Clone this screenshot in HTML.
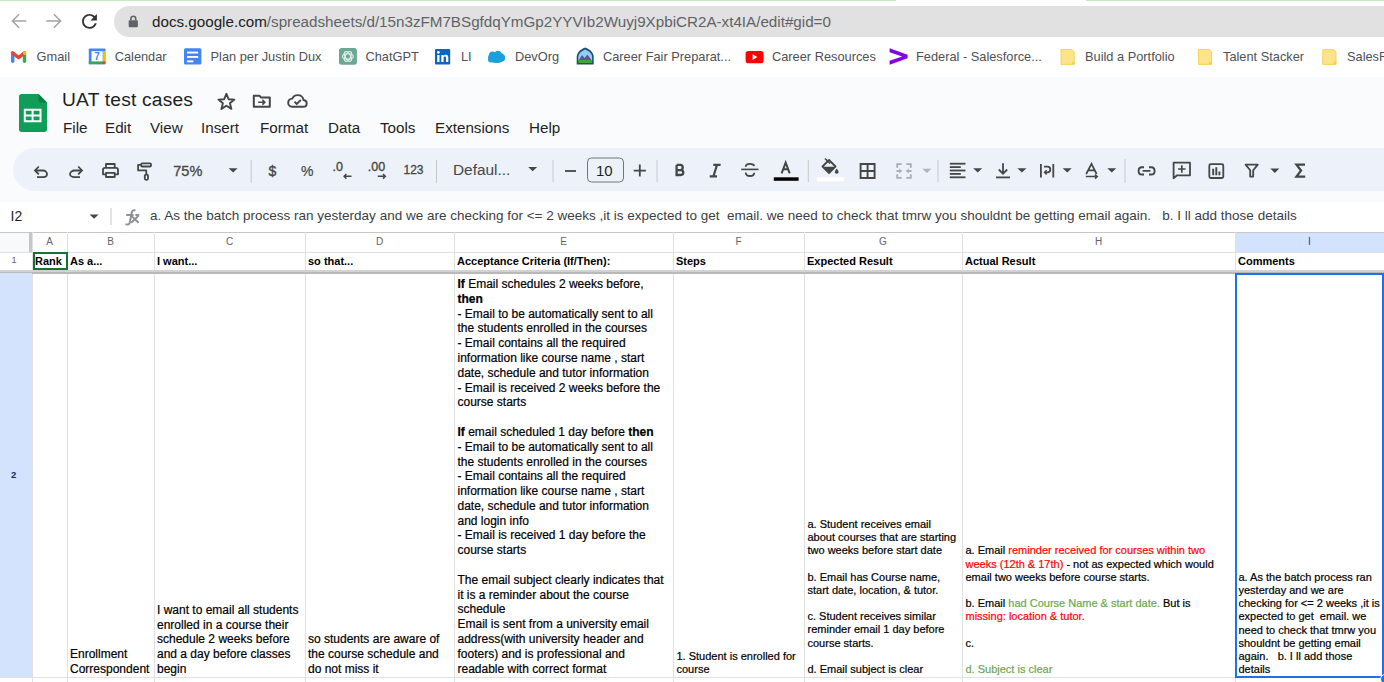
<!DOCTYPE html>
<html><head><meta charset="utf-8"><style>
*{margin:0;padding:0;box-sizing:border-box}
html,body{width:1384px;height:682px;overflow:hidden;background:#fff;font-family:"Liberation Sans",sans-serif;color:#202124}
.a{position:absolute;white-space:pre}
svg{position:absolute;overflow:visible}
.url{font-size:15px;color:#5f6368}
.bm{font-size:12.8px;color:#3c4043}
.menu{font-size:15px;color:#1f1f1f}
.cell{position:absolute;white-space:pre;font-size:12px;line-height:14.8px;color:#000;-webkit-text-stroke:0.2px currentColor}
.c11{font-size:11px;line-height:13.2px}
.colh{position:absolute;font-size:10px;color:#5f6368;text-align:center}
.r{color:#ff0000}
.g{color:#6aa84f}
b{font-weight:bold}
</style></head><body>
<div class="a" style="left:0px;top:0px;width:896px;height:1px;background:#c9e7c4;"></div>
<div class="a" style="left:1086px;top:0px;width:298px;height:1px;background:#c9e7c4;"></div>
<div class="a" style="left:114px;top:6px;width:1300px;height:31px;background:#e1e1e1;border-radius:16px"></div>
<div class="a " style="left:152px;top:14.03px;font-size:15.2px;line-height:15.2px;color:#5f6368;font-weight:normal;"><span style="color:#202124">docs.google.com</span>/spreadsheets/d/15n3zFM7BSgfdqYmGp2YYVIb2Wuyj9XpbiCR2A-xt4IA/edit#gid=0</div>
<div class="a " style="left:36.6px;top:50.96px;font-size:12.8px;line-height:12.8px;color:#4d5156;font-weight:normal;">Gmail</div>
<div class="a " style="left:114.7px;top:50.96px;font-size:12.8px;line-height:12.8px;color:#4d5156;font-weight:normal;">Calendar</div>
<div class="a " style="left:210.5px;top:50.96px;font-size:12.8px;line-height:12.8px;color:#4d5156;font-weight:normal;">Plan per Justin Dux</div>
<div class="a " style="left:365.5px;top:50.96px;font-size:12.8px;line-height:12.8px;color:#4d5156;font-weight:normal;">ChatGPT</div>
<div class="a " style="left:461px;top:50.96px;font-size:12.8px;line-height:12.8px;color:#4d5156;font-weight:normal;">LI</div>
<div class="a " style="left:515px;top:50.96px;font-size:12.8px;line-height:12.8px;color:#4d5156;font-weight:normal;">DevOrg</div>
<div class="a " style="left:603px;top:50.96px;font-size:12.8px;line-height:12.8px;color:#4d5156;font-weight:normal;">Career Fair Preparat...</div>
<div class="a " style="left:772px;top:50.96px;font-size:12.8px;line-height:12.8px;color:#4d5156;font-weight:normal;">Career Resources</div>
<div class="a " style="left:916px;top:50.96px;font-size:12.8px;line-height:12.8px;color:#4d5156;font-weight:normal;">Federal - Salesforce...</div>
<div class="a " style="left:1085px;top:50.96px;font-size:12.8px;line-height:12.8px;color:#4d5156;font-weight:normal;">Build a Portfolio</div>
<div class="a " style="left:1223px;top:50.96px;font-size:12.8px;line-height:12.8px;color:#4d5156;font-weight:normal;">Talent Stacker</div>
<div class="a " style="left:1347px;top:50.96px;font-size:12.8px;line-height:12.8px;color:#4d5156;font-weight:normal;">SalesForce</div>
<div class="a" style="left:0px;top:77px;width:1384px;height:125px;background:#f9fbfd;"></div>
<div class="a " style="left:62px;top:89.95px;font-size:19.2px;line-height:19.2px;color:#1f1f1f;font-weight:normal;letter-spacing:0.2px">UAT test cases</div>
<div class="a " style="left:63px;top:120.43px;font-size:15.2px;line-height:15.2px;color:#1f1f1f;font-weight:normal;">File</div>
<div class="a " style="left:105px;top:120.43px;font-size:15.2px;line-height:15.2px;color:#1f1f1f;font-weight:normal;">Edit</div>
<div class="a " style="left:150px;top:120.43px;font-size:15.2px;line-height:15.2px;color:#1f1f1f;font-weight:normal;">View</div>
<div class="a " style="left:201px;top:120.43px;font-size:15.2px;line-height:15.2px;color:#1f1f1f;font-weight:normal;">Insert</div>
<div class="a " style="left:260px;top:120.43px;font-size:15.2px;line-height:15.2px;color:#1f1f1f;font-weight:normal;">Format</div>
<div class="a " style="left:328px;top:120.43px;font-size:15.2px;line-height:15.2px;color:#1f1f1f;font-weight:normal;">Data</div>
<div class="a " style="left:380px;top:120.43px;font-size:15.2px;line-height:15.2px;color:#1f1f1f;font-weight:normal;">Tools</div>
<div class="a " style="left:435px;top:120.43px;font-size:15.2px;line-height:15.2px;color:#1f1f1f;font-weight:normal;">Extensions</div>
<div class="a " style="left:529px;top:120.43px;font-size:15.2px;line-height:15.2px;color:#1f1f1f;font-weight:normal;">Help</div>
<div class="a" style="left:13px;top:148px;width:1400px;height:43px;background:#edf2fa;border-radius:22px"></div>
<div class="a " style="left:173.3px;top:164.43px;font-size:14.5px;line-height:14.5px;color:#444746;font-weight:normal;-webkit-text-stroke:0.3px #444746">75%</div>
<div class="a " style="left:453px;top:162.46px;font-size:15.4px;line-height:15.4px;color:#444746;font-weight:normal;">Defaul...</div>
<div class="a " style="left:596px;top:163.10px;font-size:15px;line-height:15px;color:#1f1f1f;font-weight:normal;">10</div>
<div class="a " style="left:268.5px;top:164.15px;font-size:14px;line-height:14px;color:#444746;font-weight:normal;-webkit-text-stroke:0.35px #444746">$</div>
<div class="a " style="left:301px;top:163.65px;font-size:14px;line-height:14px;color:#444746;font-weight:normal;-webkit-text-stroke:0.2px #444746">%</div>
<div class="a " style="left:332.5px;top:161.22px;font-size:12.5px;line-height:12.5px;color:#444746;font-weight:normal;-webkit-text-stroke:0.35px #444746">.0</div>
<div class="a " style="left:367.8px;top:161.22px;font-size:12.5px;line-height:12.5px;color:#444746;font-weight:normal;-webkit-text-stroke:0.35px #444746">.00</div>
<div class="a " style="left:403.5px;top:163.84px;font-size:12px;line-height:12px;color:#444746;font-weight:normal;-webkit-text-stroke:0.3px #444746">123</div>
<div class="a" style="left:0px;top:202px;width:1384px;height:30px;background:#fff;"></div>
<div class="a " style="left:10.5px;top:209.15px;font-size:14px;line-height:14px;color:#1f1f1f;font-weight:normal;">I2</div>
<div class="a " style="left:150px;top:209.07px;font-size:13.5px;line-height:13.5px;color:#3c4043;font-weight:normal;">a. As the batch process ran yesterday and we are checking for &lt;= 2 weeks ,it is expected to get  email. we need to check that tmrw you shouldnt be getting email again.   b. I ll add those details</div>
<svg style="left:0;top:0" width="1384" height="682" viewBox="0 0 1384 682"><g fill="none" stroke="#a3a3a3" stroke-width="1.5" stroke-linecap="square"><path d="M12.8 21H25.6M18.6 14.8L12.4 21L18.6 27.2"/><path d="M47 21H60.2M54.4 14.8L60.6 21L54.4 27.2"/></g><path transform="translate(78.3,10.2) scale(0.93)" fill="#333" d="M17.65 6.35C16.2 4.9 14.21 4 12 4c-4.42 0-7.99 3.58-7.99 8s3.57 8 7.99 8c3.73 0 6.84-2.55 7.73-6h-2.08c-.82 2.33-3.04 4-5.65 4-3.31 0-6-2.69-6-6s2.69-6 6-6c1.66 0 3.14.69 4.22 1.78L13 11h7V4l-2.35 2.35z"/><rect x="128.7" y="20.2" width="9.2" height="7" rx="1" fill="#5f6368"/><path d="M130.9 20.6V18.6a2.4 2.4 0 0 1 4.8 0V20.6" fill="none" stroke="#5f6368" stroke-width="1.6"/><g fill="none" stroke-width="3.4" stroke-linecap="round" stroke-linejoin="round"><path d="M12.7 54.5V61.2" stroke="#4285f4"/><path d="M24.5 54.5V61.2" stroke="#34a853"/><path d="M12.6 52.9L18.6 57.6L24.6 52.9" stroke="#ea4335"/><path d="M24.6 52.9L24.6 53.2" stroke="#fbbc04"/></g><rect x="88.8" y="48.4" width="16.6" height="15.8" rx="0.8" fill="#4285f4"/><rect x="102.6" y="51.2" width="2.8" height="10.4" fill="#fbbc04"/><rect x="88.8" y="61.4" width="13.8" height="2.8" fill="#34a853"/><rect x="102.6" y="61.4" width="2.8" height="2.8" fill="#ea4335"/><rect x="91.5" y="51.2" width="11.1" height="10.2" fill="#fff"/><text x="97" y="60.4" font-size="10" font-weight="bold" fill="#4285f4" text-anchor="middle" font-family="Liberation Sans">7</text><rect x="184" y="48.2" width="17.4" height="16.2" rx="1.5" fill="#4285f4"/><rect x="187" y="51.6" width="11.2" height="1.9" fill="#fff"/><rect x="187" y="56" width="11.2" height="1.9" fill="#fff"/><rect x="187" y="60.4" width="6.4" height="1.9" fill="#fff"/><rect x="339" y="48" width="17.9" height="16.8" rx="2.5" fill="#6aa893"/><g fill="none" stroke="#e3f1ec" stroke-width="1.1"><ellipse cx="347.9" cy="56.4" rx="5.4" ry="2.6"/><ellipse cx="347.9" cy="56.4" rx="5.4" ry="2.6" transform="rotate(60 347.9 56.4)"/><ellipse cx="347.9" cy="56.4" rx="5.4" ry="2.6" transform="rotate(120 347.9 56.4)"/></g><rect x="435" y="49" width="15.2" height="15.6" rx="1" fill="#0a66c2"/><rect x="437.2" y="55" width="2.3" height="7" fill="#fff"/><circle cx="438.35" cy="52.3" r="1.35" fill="#fff"/><path d="M441.3 62V55H443.5V56.2C444 55.3 445 54.8 446 54.8C447.6 54.8 448.3 55.8 448.3 57.6V62H446V58.1C446 57.1 445.7 56.6 444.9 56.6C444 56.6 443.6 57.2 443.6 58.2V62z" fill="#fff"/><g fill="#1ca0dc"><ellipse cx="496.5" cy="57.5" rx="8.5" ry="5.6"/><circle cx="492.5" cy="55" r="3.5"/><circle cx="498" cy="54.2" r="3.5"/><circle cx="501.5" cy="58" r="3.6"/><circle cx="491" cy="59.5" r="3"/></g><path d="M576.7 64.6V57C576.7 53 580 49.5 585.2 47.6C590.4 49.5 593.7 53 593.7 57V64.6z" fill="#1d4e7a"/><path d="M578.3 61V57.2C578.3 54 581 51.3 585.2 49.6C589.4 51.3 592.1 54 592.1 57.2V61z" fill="#8fd1f0"/><path d="M578.3 61L582 55L584.5 58L587.5 54.5L592.1 61z" fill="#6a4ca0"/><rect x="578.3" y="60" width="13.8" height="3" fill="#3aa83a"/><rect x="745.6" y="51" width="18" height="12.2" rx="2.8" fill="#ff0000"/><path d="M752.6 54.3V59.9L757.4 57.1z" fill="#fff"/><path d="M889.6 48.2L907.6 54.8V58.2L889.6 64.8V60.8L902.2 56.5L889.6 52.2z" fill="#8600e6"/><path d="M1061.0 49.6H1071.8999999999999L1074.1999999999998 51.9V64.4H1061.0z" fill="#fde48c" stroke="#f3d046" stroke-width="0.9"/><path d="M1071.8 61.8h2.6v2.6h-2.6z" fill="#f5d13c"/><path d="M1198.4 49.6H1209.3L1211.6 51.9V64.4H1198.4z" fill="#fde48c" stroke="#f3d046" stroke-width="0.9"/><path d="M1209.2 61.8h2.6v2.6h-2.6z" fill="#f5d13c"/><path d="M1322.8000000000002 49.6H1333.7L1336.0 51.9V64.4H1322.8000000000002z" fill="#fde48c" stroke="#f3d046" stroke-width="0.9"/><path d="M1333.6000000000001 61.8h2.6v2.6h-2.6z" fill="#f5d13c"/><path d="M21.5 94H38.5L47 102.5V129.5C47 131 45.8 132 44.5 132H21.5C20 132 19 131 19 129.5V96.5C19 95 20 94 21.5 94z" fill="#0f9d58"/><path d="M38.5 94V100C38.5 101.5 39.5 102.5 41 102.5H47z" fill="#087f43"/><path d="M23.8 108.8H41.5V122.3H23.8z M25.8 110.8V114.5H31.6V110.8z M33.6 110.8V114.5H39.5V110.8z M25.8 116.5V120.3H31.6V116.5z M33.6 116.5V120.3H39.5V116.5z" fill="#fff" fill-rule="evenodd"/><path d="M226.4 93.8L228.6 99.2L234.4 99.6L229.9 103.3L231.4 108.9L226.4 105.8L221.4 108.9L222.9 103.3L218.4 99.6L224.2 99.2z" fill="none" stroke="#444746" stroke-width="1.9" stroke-linejoin="round"/><path d="M253.8 95.8H259.4L261.2 97.6H269.8V106.8H253.8z" fill="none" stroke="#444746" stroke-width="2" stroke-linejoin="round"/><path d="M258.2 102.2H265M262.4 99.8L264.8 102.2L262.4 104.6" fill="none" stroke="#444746" stroke-width="1.6"/><path d="M292 106.8H303.2C305.3 106.8 306.7 105.3 306.7 103.4C306.7 101.5 305.3 100.2 303.5 100C303 97 300.6 95.1 297.6 95.1C295.1 95.1 293.2 96.5 292.3 98.6C289.8 98.8 288.2 100.7 288.2 102.8C288.2 105 289.9 106.8 292 106.8z" fill="none" stroke="#444746" stroke-width="1.9"/><path d="M294.5 101.8L296.8 104L300.8 100" fill="none" stroke="#444746" stroke-width="1.9"/><g fill="none" stroke="#444746" stroke-width="1.8"><path d="M35.5 170.5H43C45.3 170.5 47 172.2 47 174.1C47 176 45.3 177.2 43 177.2H37"/><path d="M38.8 166.5L35 170.5L38.8 174.4"/><path d="M82 170.5H74.5C72.2 170.5 70 172.2 70 174.1C70 176 72.2 177.2 74.5 177.2H80"/><path d="M78.2 166.5L82 170.5L78.2 174.4"/></g><g fill="none" stroke="#444746" stroke-width="1.8" stroke-linejoin="round"><path d="M106 167.4V164H114.7V167.4"/><path d="M105.8 174.3H103V169.8C103 168.6 103.8 167.9 105 167.9H116C117.2 167.9 118 168.6 118 169.8V174.3H115"/><path d="M106 172.9H114.7V177H106z"/></g><g fill="none" stroke="#444746" stroke-width="1.8" stroke-linejoin="round"><rect x="141.2" y="163.3" width="9.8" height="3.2" rx="1"/><path d="M141 164.9H138.1V170.4H146.3V174"/><rect x="144.8" y="174.6" width="3.2" height="5.2" rx="1.2"/></g><path d="M228.6 168.3h9l-4.5 4.3z" fill="#444746"/><path d="M528.2 167h9l-4.5 4.3z" fill="#444746"/><path d="M922.4 168.7h9l-4.5 4.3z" fill="#b0b3b8"/><path d="M973.2 168.2h9l-4.5 4.3z" fill="#444746"/><path d="M1017.4 168.2h9l-4.5 4.3z" fill="#444746"/><path d="M1062.7 168.2h9l-4.5 4.3z" fill="#444746"/><path d="M1107.3 168.2h9l-4.5 4.3z" fill="#444746"/><path d="M1270.3 168.6h9l-4.5 4.3z" fill="#444746"/><path d="M89.6 214.5h9l-4.5 4.3z" fill="#444746"/><rect x="250.7" y="160" width="1" height="23" fill="#c7c7c7"/><rect x="436.0" y="160" width="1" height="23" fill="#c7c7c7"/><rect x="552.5" y="160" width="1" height="22" fill="#c7c7c7"/><rect x="656.5" y="160" width="1" height="22" fill="#c7c7c7"/><rect x="807.8" y="160" width="1" height="22" fill="#c7c7c7"/><rect x="937.5" y="160" width="1" height="22" fill="#c7c7c7"/><rect x="1124.5" y="159" width="1" height="24" fill="#c7c7c7"/><rect x="110.5" y="208" width="1" height="17" fill="#c7c7c7"/><path d="M351.5 176.3H344.2M346.4 174L344.1 176.3L346.4 178.6" fill="none" stroke="#444746" stroke-width="1.5"/><path d="M377.8 176.3H385.2M383 174L385.3 176.3L383 178.6" fill="none" stroke="#444746" stroke-width="1.5"/><path d="M565 171H576" stroke="#444746" stroke-width="1.8"/><path d="M633.7 170.6H645.9M639.8 164.6V176.6" stroke="#444746" stroke-width="1.8"/><rect x="587.5" y="158" width="36" height="24" rx="4" fill="none" stroke="#747775" stroke-width="1"/><path d="M741.2 169.4H758.5" stroke="#444746" stroke-width="1.6"/><path d="M754.2 166.2C754 164.8 752.4 163.9 749.9 163.9C747.3 163.9 745.7 165.1 745.7 166.8" fill="none" stroke="#444746" stroke-width="1.8"/><path d="M745.6 172.6C745.9 174.6 747.6 176 750 176C752.6 176 754.2 174.7 754.2 172.7" fill="none" stroke="#444746" stroke-width="1.8"/><path d="M713.3 164.9H720.6M709.7 176.4H717M717 164.9L713.4 176.4" fill="none" stroke="#444746" stroke-width="2.1"/><path d="M676.6 164.9V175H680.6C682.5 175 683.3 174 683.3 172.6C683.3 171.2 682.4 170.2 680.6 170.2H676.6M676.6 170.2H680.2C681.8 170.2 682.7 169.3 682.7 167.5C682.7 165.9 681.7 164.9 680.2 164.9H676.6" fill="none" stroke="#444746" stroke-width="2.3"/><path d="M781.6 173.3L785.65 162.6L789.7 173.3M783.1 169.3H788.2" fill="none" stroke="#444746" stroke-width="2"/><rect x="773.8" y="177.3" width="24.8" height="3.5" fill="#000"/><path d="M825 158.5L830 163.5" stroke="#444746" stroke-width="1.6"/><path d="M822.5 166.5L829 160L835.5 166.5L829 173z" fill="none" stroke="#444746" stroke-width="1.8" stroke-linejoin="round"/><path d="M823 166.8H835L829 172.8z" fill="#444746"/><path d="M836.8 168.5C836.8 168.5 834.8 170.8 834.8 172C834.8 173 835.7 173.7 836.8 173.7C837.9 173.7 838.6 173 838.6 172C838.6 170.8 836.8 168.5 836.8 168.5z" fill="#444746"/><rect x="816.7" y="177.3" width="27.3" height="4" fill="#fff"/><path d="M860.6 164H874.6V178H860.6z M867.6 164V178 M860.6 171H874.6" fill="none" stroke="#444746" stroke-width="1.9"/><g fill="none" stroke="#a9adb3" stroke-width="1.8"><path d="M901.6 164.2H897.2V167.8M897.2 174.2V177.8H901.6"/><path d="M906.4 164.2H910.8V167.8M910.8 174.2V177.8H906.4"/><path d="M896.4 171H900"/><path d="M911.6 171H908"/></g><path d="M899.2 168.6L902.2 171L899.2 173.4z M908.8 168.6L905.8 171L908.8 173.4z" fill="#a9adb3"/><g fill="#444746"><rect x="949.8" y="162.8" width="15.7" height="1.8"/><rect x="949.8" y="166.2" width="11" height="1.8"/><rect x="949.8" y="169.6" width="15.7" height="1.8"/><rect x="949.8" y="173" width="11" height="1.8"/><rect x="949.8" y="176.4" width="15.7" height="1.8"/></g><path d="M1003 163.3V173.5M998.8 169.5L1003 173.8L1007.2 169.5" fill="none" stroke="#444746" stroke-width="1.8"/><rect x="996" y="176.5" width="14" height="1.8" fill="#444746"/><g fill="none" stroke="#444746" stroke-width="1.8"><path d="M1040.9 164V177.4M1053.3 164V177.4"/><path d="M1044 166.6H1047.5C1049.2 166.6 1050.3 167.8 1050.3 169.4C1050.3 171 1049.2 172.3 1047.5 172.3H1045"/><path d="M1046.7 170.2L1044.6 172.3L1046.7 174.4" stroke-width="1.5"/></g><path d="M1086.2 174L1091.5 163.8L1096.6 174M1088 170.3H1095" fill="none" stroke="#444746" stroke-width="1.7"/><path d="M1085.8 176.6H1097M1095 174.6L1097.3 176.6L1095 178.6" fill="none" stroke="#444746" stroke-width="1.5"/><path d="M1144 167.3H1141.8C1139.8 167.3 1138.6 168.9 1138.6 170.9C1138.6 172.9 1139.8 174.5 1141.8 174.5H1144M1149 167.3H1151.2C1153.2 167.3 1154.6 168.9 1154.6 170.9C1154.6 172.9 1153.2 174.5 1151.2 174.5H1149M1142.6 170.9H1150.4" fill="none" stroke="#444746" stroke-width="1.9"/><path d="M1173.6 162.7H1190V175.3H1177.1L1173.6 178.2z" fill="none" stroke="#444746" stroke-width="1.8" stroke-linejoin="round"/><path d="M1181.8 165.3V172.7M1178.1 169H1185.5" stroke="#444746" stroke-width="1.7"/><rect x="1209.3" y="164.2" width="14" height="13.8" rx="1.5" fill="none" stroke="#444746" stroke-width="1.8"/><path d="M1213.2 168.8V175.2M1216.3 167.2V175.2M1219.4 171.5V175.2" stroke="#444746" stroke-width="1.9"/><path d="M1245.6 164.6H1257.8L1253.2 170.2V176.6H1250.2V170.2z" fill="none" stroke="#444746" stroke-width="1.8" stroke-linejoin="round"/><path d="M1305 164.6H1296.5L1301 170.6L1296.5 176.6H1305.2" fill="none" stroke="#444746" stroke-width="2.3"/><g fill="none" stroke="#8f9295" stroke-width="2"><path d="M135.4 210.6C134 209.8 132.2 210.3 131.8 212.3L129.8 222.4C129.3 224.5 127.6 225.1 125.5 224.2"/><path d="M126.2 215H133.6M135.4 215H139.2" stroke-width="1.8"/><path d="M131.2 215.6L138.6 222.8M138.6 215.6L131.2 222.8"/></g></svg>
<div class="a" style="left:0px;top:232px;width:1384px;height:20px;background:#fff;"></div>
<div class="a" style="left:0px;top:232px;width:29px;height:20px;background:#f8f9fa;"></div>
<div class="a" style="left:29px;top:232px;width:3px;height:20px;background:#c7c7c7;"></div>
<div class="a" style="left:1235px;top:232px;width:149px;height:20px;background:#d3e3fd;"></div>
<div class="a" style="left:0px;top:232px;width:1384px;height:1px;background:#c7c7c7;"></div>
<div class="a" style="left:0px;top:252px;width:1384px;height:1px;background:#e1e1e1;"></div>
<div class="colh a" style="left:32px;top:232px;width:35px;height:20px;line-height:20px;color:#5f6368">A</div>
<div class="colh a" style="left:67px;top:232px;width:87px;height:20px;line-height:20px;color:#5f6368">B</div>
<div class="colh a" style="left:154px;top:232px;width:151px;height:20px;line-height:20px;color:#5f6368">C</div>
<div class="colh a" style="left:305px;top:232px;width:149px;height:20px;line-height:20px;color:#5f6368">D</div>
<div class="colh a" style="left:454px;top:232px;width:219px;height:20px;line-height:20px;color:#5f6368">E</div>
<div class="colh a" style="left:673px;top:232px;width:131px;height:20px;line-height:20px;color:#5f6368">F</div>
<div class="colh a" style="left:804px;top:232px;width:158px;height:20px;line-height:20px;color:#5f6368">G</div>
<div class="colh a" style="left:962px;top:232px;width:273px;height:20px;line-height:20px;color:#5f6368">H</div>
<div class="colh a" style="left:1235px;top:232px;width:149px;height:20px;line-height:20px;color:#0b3d91">I</div>
<div class="a " style="left:11.5px;top:256.38px;font-size:9px;line-height:9px;color:#5f6368;font-weight:normal;">1</div>
<div class="a" style="left:32px;top:232px;width:1px;height:450px;background:#e1e1e1;"></div>
<div class="a" style="left:67px;top:232px;width:1px;height:450px;background:#e1e1e1;"></div>
<div class="a" style="left:154px;top:232px;width:1px;height:450px;background:#e1e1e1;"></div>
<div class="a" style="left:305px;top:232px;width:1px;height:450px;background:#e1e1e1;"></div>
<div class="a" style="left:454px;top:232px;width:1px;height:450px;background:#e1e1e1;"></div>
<div class="a" style="left:673px;top:232px;width:1px;height:450px;background:#e1e1e1;"></div>
<div class="a" style="left:804px;top:232px;width:1px;height:450px;background:#e1e1e1;"></div>
<div class="a" style="left:962px;top:232px;width:1px;height:450px;background:#e1e1e1;"></div>
<div class="a" style="left:1235px;top:232px;width:1px;height:450px;background:#e1e1e1;"></div>
<div class="a" style="left:0px;top:270px;width:1384px;height:2px;background:#d2d2d2;"></div>
<div class="a" style="left:0px;top:272px;width:1384px;height:1.6px;background:#b9b9b9;"></div>
<div class="a" style="left:0px;top:273px;width:32px;height:404px;background:#d3e3fd;"></div>
<div class="a " style="left:11px;top:470.16px;font-size:9.5px;line-height:9.5px;color:#0b2a6b;font-weight:bold;">2</div>
<div class="a" style="left:0px;top:677px;width:1384px;height:1px;background:#e1e1e1;"></div>
<div class="a " style="left:35px;top:255.69px;font-size:11px;line-height:11px;color:#000;font-weight:bold;">Rank</div>
<div class="a " style="left:70px;top:255.69px;font-size:11px;line-height:11px;color:#000;font-weight:bold;">As a...</div>
<div class="a " style="left:157px;top:255.69px;font-size:11px;line-height:11px;color:#000;font-weight:bold;">I want...</div>
<div class="a " style="left:308px;top:255.69px;font-size:11px;line-height:11px;color:#000;font-weight:bold;">so that...</div>
<div class="a " style="left:457px;top:255.69px;font-size:11px;line-height:11px;color:#000;font-weight:bold;">Acceptance Criteria (If/Then):</div>
<div class="a " style="left:676px;top:255.69px;font-size:11px;line-height:11px;color:#000;font-weight:bold;">Steps</div>
<div class="a " style="left:807px;top:255.69px;font-size:11px;line-height:11px;color:#000;font-weight:bold;">Expected Result</div>
<div class="a " style="left:965px;top:255.69px;font-size:11px;line-height:11px;color:#000;font-weight:bold;">Actual Result</div>
<div class="a " style="left:1238px;top:255.69px;font-size:11px;line-height:11px;color:#000;font-weight:bold;">Comments</div>
<div class="a" style="left:33px;top:252px;width:35px;height:18px;background:transparent;border:2px solid #137333"></div>
<div class="cell" style="left:70px;top:647.14px;font-size:12px;line-height:14.8px;color:#000">Enrollment<br>Correspondent</div>
<div class="cell" style="left:157px;top:602.74px;font-size:12px;line-height:14.8px;color:#000">I want to email all students<br>enrolled in a course their<br>schedule 2 weeks before<br>and a day before classes<br>begin</div>
<div class="cell" style="left:308px;top:632.34px;font-size:12px;line-height:14.8px;color:#000">so students are aware of<br>the course schedule and<br>do not miss it</div>
<div class="cell" style="left:457.5px;top:276.94px;font-size:12px;line-height:14.8px;color:#000"><b>If</b> Email schedules 2 weeks before,<br><b>then</b><br>- Email to be automatically sent to all<br>the students enrolled in the courses<br>- Email contains all the required<br>information like course name , start<br>date, schedule and tutor information<br>- Email is received 2 weeks before the<br>course starts<br><br><b>If</b> email scheduled 1 day before <b>then</b><br>- Email to be automatically sent to all<br>the students enrolled in the courses<br>- Email contains all the required<br>information like course name , start<br>date, schedule and tutor information<br>and login info<br>- Email is received 1 day before the<br>course starts<br><br>The email subject clearly indicates that<br>it is a reminder about the course<br>schedule<br>Email is sent from a university email<br>address(with university header and<br>footers) and is professional and<br>readable with correct format</div>
<div class="cell" style="left:676.5px;top:649.89px;font-size:11px;line-height:13.2px;color:#000">1. Student is enrolled for<br>course</div>
<div class="cell" style="left:807.5px;top:517.69px;font-size:11px;line-height:13.2px;color:#000">a. Student receives email<br>about courses that are starting<br>two weeks before start date<br><br>b. Email has Course name,<br>start date, location, &amp; tutor.<br><br>c. Student receives similar<br>reminder email 1 day before<br>course starts.<br><br>d. Email subject is clear</div>
<div class="cell" style="left:965.5px;top:544.39px;font-size:11px;line-height:13.2px;color:#000">a. Email <span class="r">reminder received for courses within two</span><br><span class="r">weeks (12th &amp; 17th)</span> - not as expected which would<br>email two weeks before course starts.<br><br>b. Email <span class="g">had Course Name &amp; start date.</span> But is<br><span class="r">missing: location &amp; tutor.</span><br><br>c.<br><br><span class="g">d. Subject is clear</span></div>
<div class="cell" style="left:1238.5px;top:570.89px;font-size:11px;line-height:13.2px;color:#000">a. As the batch process ran<br>yesterday and we are<br>checking for &lt;= 2 weeks ,it is<br>expected to get  email. we<br>need to check that tmrw you<br>shouldnt be getting email<br>again.   b. I ll add those<br>details</div>
<div class="a" style="left:1235px;top:273px;width:149px;height:405px;background:transparent;border:2px solid #1a73e8;border-right-width:2px"></div>
<div class="a" style="left:1379.5px;top:673.5px;width:10px;height:10px;border-radius:5px;background:#1a73e8;border:1px solid #fff"></div>
</body></html>
